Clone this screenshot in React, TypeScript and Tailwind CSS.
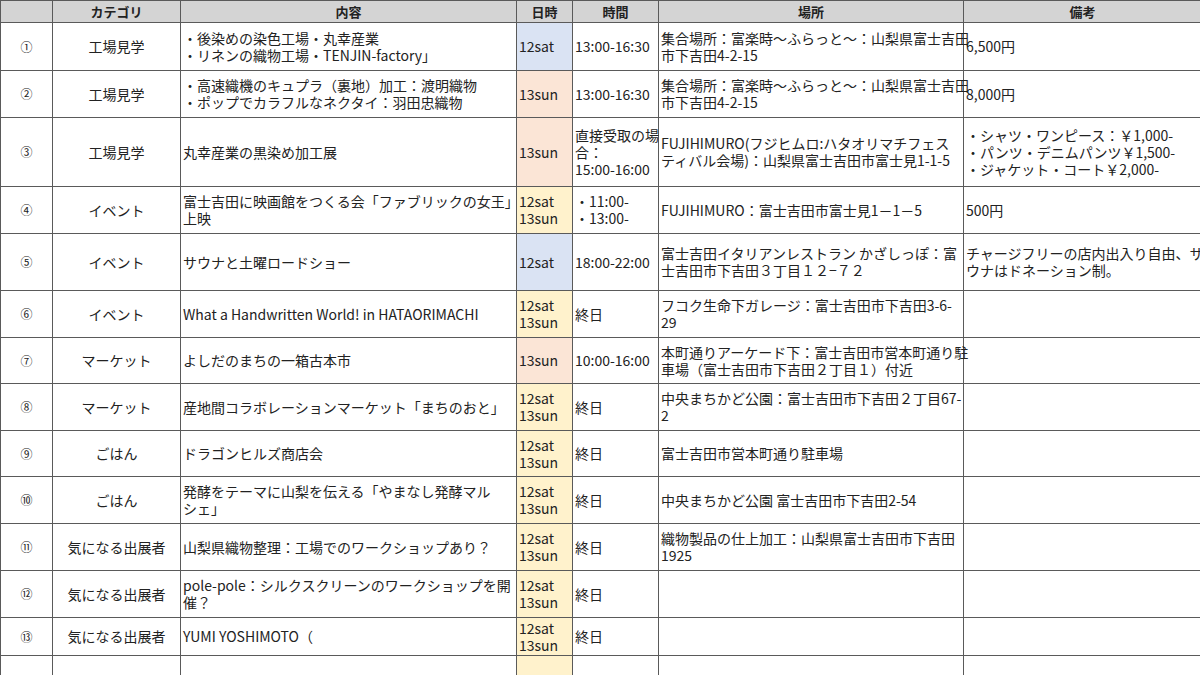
const BLUE = 'bg-[#dae3f3]'
const PEACH = 'bg-[#fbe5d6]'
const YELLOW = 'bg-[#fff2cc]'

type Row = {
  no: string
  cat: string
  content: string[]
  date: string[]
  color: string
  time: string[]
  place: string[]
  note: string[]
  h: string
}

const rows: Row[] = [
  { no: '①', cat: '工場見学', content: ['・後染めの染色工場・丸幸産業', '・リネンの織物工場・TENJIN-factory」'], date: ['12sat'], color: BLUE, time: ['13:00-16:30'], place: ['集合場所：富楽時〜ふらっと〜：山梨県富士吉田', '市下吉田4-2-15'], note: ['6,500円'], h: 'h-[48px]' },
  { no: '②', cat: '工場見学', content: ['・高速織機のキュプラ（裏地）加工：渡明織物', '・ポップでカラフルなネクタイ：羽田忠織物'], date: ['13sun'], color: PEACH, time: ['13:00-16:30'], place: ['集合場所：富楽時〜ふらっと〜：山梨県富士吉田', '市下吉田4-2-15'], note: ['8,000円'], h: 'h-[47px]' },
  { no: '③', cat: '工場見学', content: ['丸幸産業の黒染め加工展'], date: ['13sun'], color: PEACH, time: ['直接受取の場', '合：', '15:00-16:00'], place: ['FUJIHIMURO(フジヒムロ:ハタオリマチフェス', 'ティバル会場)：山梨県富士吉田市富士見1-1-5'], note: ['・シャツ・ワンピース：￥1,000-', '・パンツ・デニムパンツ￥1,500-', '・ジャケット・コート￥2,000-'], h: 'h-[69px]' },
  { no: '④', cat: 'イベント', content: ['富士吉田に映画館をつくる会「ファブリックの女王」', '上映'], date: ['12sat', '13sun'], color: YELLOW, time: ['・11:00-', '・13:00-'], place: ['FUJIHIMURO：富士吉田市富士見1－1－5'], note: ['500円'], h: 'h-[47px]' },
  { no: '⑤', cat: 'イベント', content: ['サウナと土曜ロードショー'], date: ['12sat'], color: BLUE, time: ['18:00-22:00'], place: ['富士吉田イタリアンレストラン かざしっぽ：富', '士吉田市下吉田３丁目１２−７２'], note: ['チャージフリーの店内出入り自由、サ', 'ウナはドネーション制。'], h: 'h-[57px]' },
  { no: '⑥', cat: 'イベント', content: ['What a Handwritten World! in HATAORIMACHI'], date: ['12sat', '13sun'], color: YELLOW, time: ['終日'], place: ['フコク生命下ガレージ：富士吉田市下吉田3-6-', '29'], note: [], h: 'h-[47px]' },
  { no: '⑦', cat: 'マーケット', content: ['よしだのまちの一箱古本市'], date: ['13sun'], color: PEACH, time: ['10:00-16:00'], place: ['本町通りアーケード下：富士吉田市営本町通り駐', '車場（富士吉田市下吉田２丁目１）付近'], note: [], h: 'h-[46px]' },
  { no: '⑧', cat: 'マーケット', content: ['産地間コラボレーションマーケット「まちのおと」'], date: ['12sat', '13sun'], color: YELLOW, time: ['終日'], place: ['中央まちかど公園：富士吉田市下吉田２丁目67-', '2'], note: [], h: 'h-[47px]' },
  { no: '⑨', cat: 'ごはん', content: ['ドラゴンヒルズ商店会'], date: ['12sat', '13sun'], color: YELLOW, time: ['終日'], place: ['富士吉田市営本町通り駐車場'], note: [], h: 'h-[46px]' },
  { no: '⑩', cat: 'ごはん', content: ['発酵をテーマに山梨を伝える「やまなし発酵マル', 'シェ」'], date: ['12sat', '13sun'], color: YELLOW, time: ['終日'], place: ['中央まちかど公園 富士吉田市下吉田2-54'], note: [], h: 'h-[47px]' },
  { no: '⑪', cat: '気になる出展者', content: ['山梨県織物整理：工場でのワークショップあり？'], date: ['12sat', '13sun'], color: YELLOW, time: ['終日'], place: ['織物製品の仕上加工：山梨県富士吉田市下吉田', '1925'], note: [], h: 'h-[47px]' },
  { no: '⑫', cat: '気になる出展者', content: ['pole-pole：シルクスクリーンのワークショップを開', '催？'], date: ['12sat', '13sun'], color: YELLOW, time: ['終日'], place: [], note: [], h: 'h-[47px]' },
  { no: '⑬', cat: '気になる出展者', content: ['YUMI YOSHIMOTO（'], date: ['12sat', '13sun'], color: YELLOW, time: ['終日'], place: [], note: [], h: 'h-[38px]' },
]

const cell = 'border border-[#5a5a5a] px-[2px] py-0 align-middle text-left leading-[17px]'

function Lines({ lines }: { lines: string[] }) {
  return (
    <>
      {lines.map((l, i) => (
        <div key={i} className="whitespace-nowrap">{l}</div>
      ))}
    </>
  )
}

export default function App() {
  return (
    <div className="w-[1200px] h-[675px] overflow-hidden bg-white text-[14px] text-[#222]" style={{ fontFamily: '"Noto Sans CJK JP", "Noto Sans", sans-serif' }}>
      <table className="table-fixed border-collapse w-[1201px]">
        <colgroup>
          <col className="w-[52px]" />
          <col className="w-[128px]" />
          <col className="w-[336px]" />
          <col className="w-[56px]" />
          <col className="w-[86px]" />
          <col className="w-[305px]" />
          <col className="w-[238px]" />
        </colgroup>
        <thead>
          <tr className="h-[22px] bg-[#d4d4d4] font-bold text-[13px] leading-[16px]">
            <th className="border border-[#5a5a5a]"></th>
            <th className="border border-[#5a5a5a]">カテゴリ</th>
            <th className="border border-[#5a5a5a]">内容</th>
            <th className="border border-[#5a5a5a]">日時</th>
            <th className="border border-[#5a5a5a]">時間</th>
            <th className="border border-[#5a5a5a]">場所</th>
            <th className="border border-[#5a5a5a]">備考</th>
          </tr>
        </thead>
        <tbody>
          {rows.map((r) => (
            <tr key={r.no} className={r.h}>
              <td className="border border-[#5a5a5a] text-center text-[12px]">{r.no}</td>
              <td className="border border-[#5a5a5a] text-center">{r.cat}</td>
              <td className={cell}><Lines lines={r.content} /></td>
              <td className={`${cell} ${r.color}`}><Lines lines={r.date} /></td>
              <td className={cell}><Lines lines={r.time} /></td>
              <td className={cell}><Lines lines={r.place} /></td>
              <td className={cell}><Lines lines={r.note} /></td>
            </tr>
          ))}
          <tr className="h-[30px]">
            <td className="border border-[#5a5a5a]"></td>
            <td className="border border-[#5a5a5a]"></td>
            <td className="border border-[#5a5a5a]"></td>
            <td className={`border border-[#5a5a5a] ${YELLOW}`}></td>
            <td className="border border-[#5a5a5a]"></td>
            <td className="border border-[#5a5a5a]"></td>
            <td className="border border-[#5a5a5a]"></td>
          </tr>
        </tbody>
      </table>
    </div>
  )
}
